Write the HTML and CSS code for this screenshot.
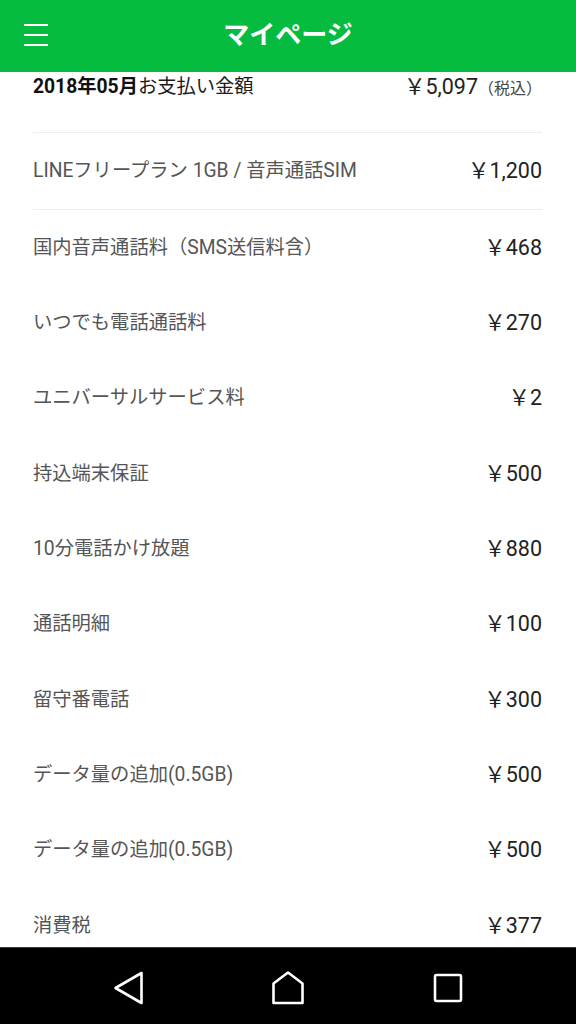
FILE: index.html
```html
<!DOCTYPE html>
<html lang="ja">
  <head>
    <meta charset="UTF-8" />
    <meta name="viewport" content="width=device-width, initial-scale=1.0" />
    <title>マイページ</title>
    <link rel="stylesheet" href="styles.css">
  </head>
  <body>
    <header class="topbar">
      <button class="menu-button" aria-label="メニュー">
        <svg width="24" height="22" viewBox="0 0 24 22">
          <rect x="0" y="0" width="24" height="2" fill="#fff" />
          <rect x="0" y="10" width="24" height="2" fill="#fff" />
          <rect x="0" y="20" width="24" height="2" fill="#fff" />
        </svg>
      </button>
      <h1 class="page-title">マイページ</h1>
    </header>

    <main class="bill">
      <div class="bill-total">
        <p class="total-label"><b>2018年05月</b>お支払い金額</p>
        <p class="total-amount">￥5,097<span class="tax-note">（税込）</span></p>
      </div>
      <div class="bill-row bill-plan">
        <p class="item-label">LINEフリープラン 1GB / 音声通話SIM</p>
        <p class="item-amount">￥1,200</p>
      </div>
      <div class="bill-row">
        <p class="item-label">国内音声通話料（SMS送信料含）</p>
        <p class="item-amount">￥468</p>
      </div>
      <div class="bill-row">
        <p class="item-label">いつでも電話通話料</p>
        <p class="item-amount">￥270</p>
      </div>
      <div class="bill-row">
        <p class="item-label">ユニバーサルサービス料</p>
        <p class="item-amount">￥2</p>
      </div>
      <div class="bill-row">
        <p class="item-label">持込端末保証</p>
        <p class="item-amount">￥500</p>
      </div>
      <div class="bill-row">
        <p class="item-label">10分電話かけ放題</p>
        <p class="item-amount">￥880</p>
      </div>
      <div class="bill-row">
        <p class="item-label">通話明細</p>
        <p class="item-amount">￥100</p>
      </div>
      <div class="bill-row">
        <p class="item-label">留守番電話</p>
        <p class="item-amount">￥300</p>
      </div>
      <div class="bill-row">
        <p class="item-label">データ量の追加(0.5GB)</p>
        <p class="item-amount">￥500</p>
      </div>
      <div class="bill-row">
        <p class="item-label">データ量の追加(0.5GB)</p>
        <p class="item-amount">￥500</p>
      </div>
      <div class="bill-row">
        <p class="item-label">消費税</p>
        <p class="item-amount">￥377</p>
      </div>
    </main>

    <nav class="sysbar">
      <svg class="sys-icon" width="40" height="40" viewBox="0 0 40 40">
        <path d="M33.5 5 L33.5 35 L7.5 20 Z" fill="none" stroke="#fff" stroke-width="2.6" stroke-linejoin="round" />
      </svg>
      <svg class="sys-icon" width="40" height="40" viewBox="0 0 40 40">
        <path d="M5.5 35 L5.5 15.5 L20 4.5 L34.5 15.5 L34.5 35 Z" fill="none" stroke="#fff" stroke-width="2.6" stroke-linejoin="round" />
      </svg>
      <svg class="sys-icon" width="40" height="40" viewBox="0 0 40 40">
        <rect x="7" y="7" width="26" height="26" rx="1.5" fill="none" stroke="#fff" stroke-width="2.6" />
      </svg>
    </nav>
  </body>
</html>
```

FILE: styles.css
```css
* {
  box-sizing: border-box;
  margin: 0;
  padding: 0;
}
body {
  display: flex;
  flex-direction: column;
  height: 100vh;
  overflow: hidden;
  background: #fff;
  font-family: Roboto, "Noto Sans CJK JP", sans-serif;
}
.topbar {
  position: relative;
  display: flex;
  align-items: center;
  justify-content: center;
  height: 72px;
  flex: none;
  background: #06bc40;
}
.menu-button {
  position: absolute;
  left: 24px;
  top: 24px;
  display: block;
  border: none;
  background: none;
  line-height: 0;
}
.page-title {
  color: #fff;
  font-size: 26px;
  font-weight: 700;
  line-height: 32px;
  margin-top: -3px;
}
.bill {
  flex: 1;
  overflow: hidden;
  padding: 0 34px 0 33px;
}
.bill-total,
.bill-row {
  display: flex;
  justify-content: space-between;
}
.bill-total {
  height: 61px;
  padding-top: 3px;
  border-bottom: 1px solid #eceef3;
}
.total-label {
  font-size: 19.3px;
  line-height: 24px;
  color: #1a1a1a;
}
.total-label b {
  font-weight: 700;
  color: #111;
}
.total-amount {
  font-size: 21.5px;
  line-height: 24px;
  color: #222;
  margin-right: 0;
}
.tax-note {
  font-size: 16px;
  color: #444;
}
.bill-row {
  align-items: center;
  height: 75.33px;
}
.bill-plan {
  height: 77px;
  border-bottom: 1px solid #eceef3;
}
.item-label {
  font-size: 19.3px;
  line-height: 24px;
  color: #555;
}
.item-amount {
  font-size: 21.5px;
  line-height: 24px;
  color: #222;
}
.sysbar {
  display: flex;
  align-items: center;
  justify-content: center;
  gap: 120px;
  height: 77px;
  flex: none;
  background: #000;
  border-top: 1px solid #3a3a3a;
  padding-top: 3px;
}
.sys-icon {
  display: block;
}
```
